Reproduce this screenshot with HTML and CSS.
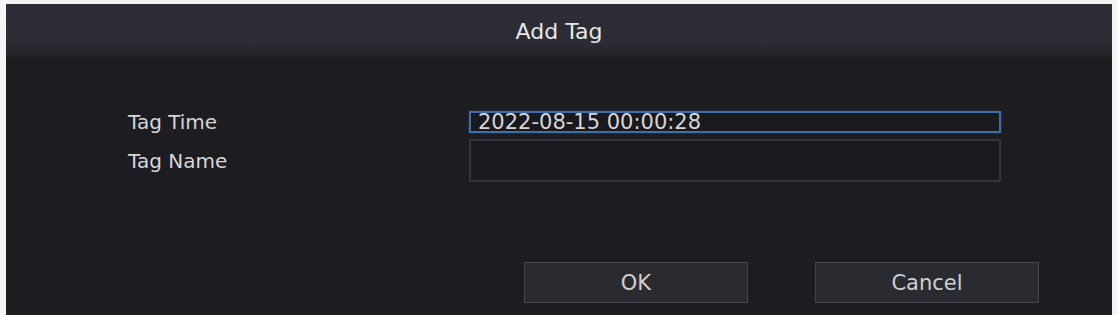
FILE: index.html
```html
<!DOCTYPE html>
<html>
<head>
<meta charset="utf-8">
<link rel="stylesheet" href="styles.css">
</head>
<body>
<div class="dialog">
  <div class="header">Add Tag</div>
  <div class="form">
    <div class="row row-time">
      <div class="label">Tag Time</div>
      <div class="input focused">2022-08-15 00:00:28</div>
    </div>
    <div class="row row-name">
      <div class="label">Tag Name</div>
      <div class="input"></div>
    </div>
  </div>
  <div class="actions">
    <div class="btn">OK</div>
    <div class="btn">Cancel</div>
  </div>
</div>
</body>
</html>
```
FILE: styles.css
```css
html, body {
  margin: 0;
  padding: 0;
  background: #f4f4f4;
}
body {
  width: 1117px;
  height: 315px;
  overflow: hidden;
  font-family: "DejaVu Sans", "Noto Sans", sans-serif;
  color: #d6d6d8;
}
.dialog {
  margin: 4px 5px 0 6px;
  height: 311px;
  background: #1c1c21;
  display: flex;
  flex-direction: column;
}
.header {
  height: 54px;
  flex: none;
  display: flex;
  align-items: center;
  justify-content: center;
  font-size: 22px;
  color: #e6e6e8;
  background: linear-gradient(#2c2d36 0%, #2a2b33 75%, #202127 100%);
}
.form {
  padding: 52px 0 0 122px;
  display: flex;
  flex-direction: column;
  gap: 5px;
}
.row {
  display: flex;
  align-items: center;
}
.label {
  width: 341px;
  font-size: 20px;
  flex: none;
}
.input {
  width: 532px;
  box-sizing: border-box;
  border: 2px solid #34353b;
  background: #19191e;
  font-size: 21px;
  padding-left: 7px;
  display: flex;
  align-items: center;
}
.row-time .input {
  height: 22px;
}
.row-name .input {
  height: 43px;
}
.input.focused {
  border-color: #3f6fa8;
  box-shadow: 0 0 2px #27446a;
}
.actions {
  margin-top: 80px;
  display: flex;
  justify-content: flex-end;
  gap: 67px;
  padding-right: 73px;
}
.btn {
  width: 224px;
  height: 41px;
  box-sizing: border-box;
  border: 1px solid #45464d;
  background: #2a2b31;
  display: flex;
  align-items: center;
  justify-content: center;
  font-size: 21px;
  color: #cfcfd2;
}
```
